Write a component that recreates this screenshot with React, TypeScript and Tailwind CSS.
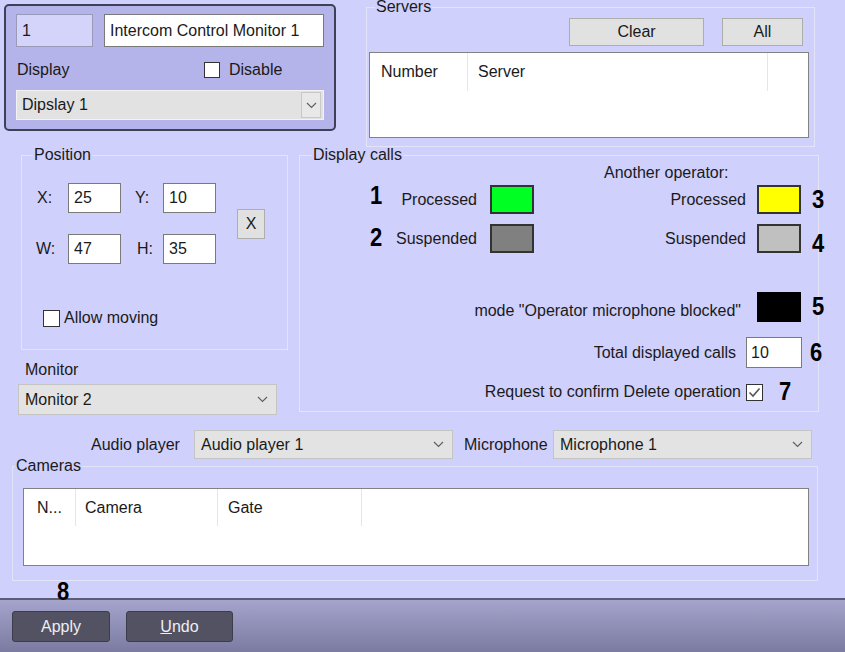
import React from "react";

const font = "font-['Liberation_Sans',Arial,sans-serif]";

function Chevron() {
  return (
    <svg width="11" height="7" viewBox="0 0 11 7">
      <polyline points="1,1 5.5,5.5 10,1" fill="none" stroke="#606060" strokeWidth="1.2" />
    </svg>
  );
}

function Field({ value, className = "" }: { value: string; className?: string }) {
  return (
    <div className={`flex shrink-0 items-center border border-[#7a7a7a] bg-white pl-[5px] ${className}`}>
      {value}
    </div>
  );
}

function Combo({ value, className = "" }: { value: string; className?: string }) {
  return (
    <div className={`flex items-center justify-between border border-[#c4c4c4] bg-[#e3e3e3] pl-[6px] pr-[8px] ${className}`}>
      <span>{value}</span>
      <Chevron />
    </div>
  );
}

function Btn({ label, className = "" }: { label: string; className?: string }) {
  return (
    <div className={`flex shrink-0 items-center justify-center border border-[#adadad] bg-[#e1e1e1] ${className}`}>
      {label}
    </div>
  );
}

function Swatch({ color, className = "" }: { color: string; className?: string }) {
  return <div className={`h-[29px] w-[44px] shrink-0 border-2 border-[#333] ${color} ${className}`} />;
}

function Num({ n, className = "" }: { n: string; className?: string }) {
  return (
    <span className={`inline-block shrink-0 scale-y-[1.2] text-[22px] font-bold leading-none text-black ${className}`}>
      {n}
    </span>
  );
}

function Group({
  title,
  legendOffset,
  className,
  children,
}: {
  title: string;
  legendOffset: string;
  className: string;
  children: React.ReactNode;
}) {
  return (
    <fieldset className={`min-w-0 border border-[#e4e4f8] ${className}`}>
      <legend className={`px-[1px] leading-[16px] ${legendOffset}`}>{title}</legend>
      {children}
    </fieldset>
  );
}

function Check({ checked = false, className = "" }: { checked?: boolean; className?: string }) {
  return (
    <div className={`flex h-[17px] w-[17px] shrink-0 items-center justify-center border border-[#333] bg-white ${className}`}>
      {checked && (
        <svg width="13" height="11" viewBox="0 0 13 11">
          <polyline points="1.5,5.5 5,9 11.5,1.5" fill="none" stroke="#555" strokeWidth="1.6" />
        </svg>
      )}
    </div>
  );
}

export default function App() {
  return (
    <div className={`flex h-[652px] w-[845px] flex-col overflow-hidden bg-[#d0d0fc] text-[16px] text-[#1a1a1a] ${font}`}>
      {/* top row */}
      <div className="flex h-[147px] items-start">
        <div className="ml-[4px] mt-[4px] flex h-[127px] w-[332px] flex-col rounded-[5px] border-2 border-[#3f3f58] bg-[#b4b4ea] pl-[10px] pt-[8px]">
          <div className="flex h-[33px] gap-[11px]">
            <div className="flex w-[77px] items-center border border-[#9a9ab8] bg-[#d4d4fb] pl-[5px]">1</div>
            <Field value="Intercom Control Monitor 1" className="w-[220px]" />
          </div>
          <div className="mt-[11px] flex h-[24px] items-center">
            <span className="w-[188px] pl-[1px]">Display</span>
            <div className="h-[16px] w-[16px] border border-[#333] bg-white" />
            <span className="ml-[9px]">Disable</span>
          </div>
          <div className="mt-[8px] flex h-[30px] w-[308px] items-center justify-between border border-[#f2f2f2] bg-[#e2e2e2] pl-[5px] pr-[2px]">
            <span>Dipslay 1</span>
            <div className="flex h-[26px] w-[20px] items-center justify-center border border-[#c8c8c8] bg-[#e8e8e8]">
              <Chevron />
            </div>
          </div>
        </div>

        <Group title="Servers" legendOffset="ml-[8px]" className="ml-[30px] -mt-[1px] flex h-[148px] w-[449px] flex-col">
          <div className="mt-[3px] flex justify-end gap-[18px] pr-[11px]">
            <Btn label="Clear" className="h-[28px] w-[135px]" />
            <Btn label="All" className="h-[28px] w-[81px]" />
          </div>
          <div className="ml-[2px] mr-[5px] mt-[6px] h-[86px] border border-[#828282] bg-white">
            <div className="flex h-[38px] items-center">
              <div className="flex h-full w-[98px] items-center border-r border-[#e6e6e6] pl-[11px]">Number</div>
              <div className="flex h-full w-[300px] items-center border-r border-[#e6e6e6] pl-[10px]">Server</div>
            </div>
          </div>
        </Group>
      </div>

      {/* middle row */}
      <div className="flex h-[268px] items-start">
        <div className="ml-[18px] flex w-[270px] shrink-0 flex-col">
          <Group title="Position" legendOffset="ml-[11px]" className="ml-[3px] flex h-[203px] w-[267px] flex-col">
            <div className="mt-[20px] flex items-center">
              <div className="flex flex-col gap-[21px]">
                <div className="flex h-[30px] items-center">
                  <span className="w-[46px] shrink-0 pl-[15px]">X:</span>
                  <Field value="25" className="h-[30px] w-[53px]" />
                  <span className="w-[42px] shrink-0 pl-[14px]">Y:</span>
                  <Field value="10" className="h-[30px] w-[53px]" />
                </div>
                <div className="flex h-[30px] items-center">
                  <span className="w-[46px] shrink-0 pl-[14px]">W:</span>
                  <Field value="47" className="h-[30px] w-[53px]" />
                  <span className="w-[42px] shrink-0 pl-[16px]">H:</span>
                  <Field value="35" className="h-[30px] w-[53px]" />
                </div>
              </div>
              <Btn label="X" className="ml-[21px] h-[30px] w-[28px]" />
            </div>
            <div className="ml-[21px] mt-[42px] flex items-center gap-[4px]">
              <Check />
              <span>Allow moving</span>
            </div>
          </Group>
          <span className="ml-[7px] mt-[12px] leading-[16px]">Monitor</span>
          <Combo value="Monitor 2" className="mt-[6px] h-[31px] w-[259px]" />
        </div>

        <Group title="Display calls" legendOffset="ml-[12px]" className="ml-[11px] flex h-[265px] w-[520px] flex-col">
          <span className="ml-[304px] mt-[2px] leading-[16px]">Another operator:</span>
          <div className="mt-[4px] flex h-[29px] items-center">
            <Num n="1" className="ml-[70px] w-[22px] self-start" />
            <span className="w-[85px] shrink-0 text-right">Processed</span>
            <Swatch color="bg-[#00ff22]" className="ml-[13px]" />
            <span className="w-[212px] shrink-0 text-right">Processed</span>
            <Swatch color="bg-[#ffff00]" className="ml-[11px]" />
            <Num n="3" className="ml-[11px]" />
          </div>
          <div className="mt-[10px] flex h-[29px] items-center">
            <Num n="2" className="ml-[70px] w-[22px] self-start pt-[2px]" />
            <span className="w-[85px] shrink-0 text-right">Suspended</span>
            <Swatch color="bg-[#808080]" className="ml-[13px]" />
            <span className="w-[212px] shrink-0 text-right">Suspended</span>
            <Swatch color="bg-[#c0c0c0]" className="ml-[11px]" />
            <Num n="4" className="ml-[11px] mt-[10px]" />
          </div>
          <div className="mt-[39px] flex h-[30px] items-center">
            <span className="mt-[8px] w-[441px] shrink-0 text-right">mode "Operator microphone blocked"</span>
            <div className="ml-[16px] h-[30px] w-[44px] shrink-0 bg-black" />
            <Num n="5" className="ml-[11px]" />
          </div>
          <div className="mt-[15px] flex h-[31px] items-center">
            <span className="w-[436px] shrink-0 text-right">Total displayed calls</span>
            <div className="ml-[10px] flex h-[31px] w-[56px] shrink-0 items-start border border-[#7a7a7a] bg-white pl-[4px] pt-[3px]">10</div>
            <Num n="6" className="ml-[8px]" />
          </div>
          <div className="mt-[14px] flex h-[20px] items-center">
            <span className="w-[441px] shrink-0 text-right">Request to confirm Delete operation</span>
            <Check checked className="ml-[5px]" />
            <Num n="7" className="ml-[16px]" />
          </div>
        </Group>
      </div>

      {/* audio row */}
      <div className="mt-[15px] flex h-[29px] items-center">
        <span className="ml-[91px] w-[103px]">Audio player</span>
        <Combo value="Audio player 1" className="h-[29px] w-[259px]" />
        <span className="ml-[11px] w-[89px]">Microphone</span>
        <Combo value="Microphone 1" className="h-[29px] w-[259px]" />
      </div>

      <Group title="Cameras" legendOffset="ml-[2px]" className="ml-[12px] -mt-[1px] flex h-[123px] w-[806px] flex-col">
        <div className="ml-[10px] mr-[8px] mt-[14px] h-[78px] border border-[#828282] bg-white">
          <div className="flex h-[37px] items-center">
            <div className="flex h-full w-[52px] items-center border-r border-[#e6e6e6] pl-[13px]">N...</div>
            <div className="flex h-full w-[142px] items-center border-r border-[#e6e6e6] pl-[9px]">Camera</div>
            <div className="flex h-full w-[144px] items-center border-r border-[#e6e6e6] pl-[10px]">Gate</div>
          </div>
        </div>
      </Group>

      <div className="h-[17px] pl-[57px] leading-[19px]">
        <Num n="8" />
      </div>

      <div className="flex flex-1 gap-[16px] border-t-2 border-[#5c5c74] bg-gradient-to-b from-[#a4a4cc] to-[#7b7ba2] pl-[12px] pt-[11px]">
        <div className="flex h-[31px] w-[98px] items-center justify-center rounded-[3px] border border-[#3c3c4a] bg-[#525262] text-[#eeeef4]">
          Apply
        </div>
        <div className="flex h-[31px] w-[107px] items-center justify-center rounded-[3px] border border-[#3c3c4a] bg-[#525262] text-[#eeeef4]">
          <span><span className="underline">U</span>ndo</span>
        </div>
      </div>
    </div>
  );
}
